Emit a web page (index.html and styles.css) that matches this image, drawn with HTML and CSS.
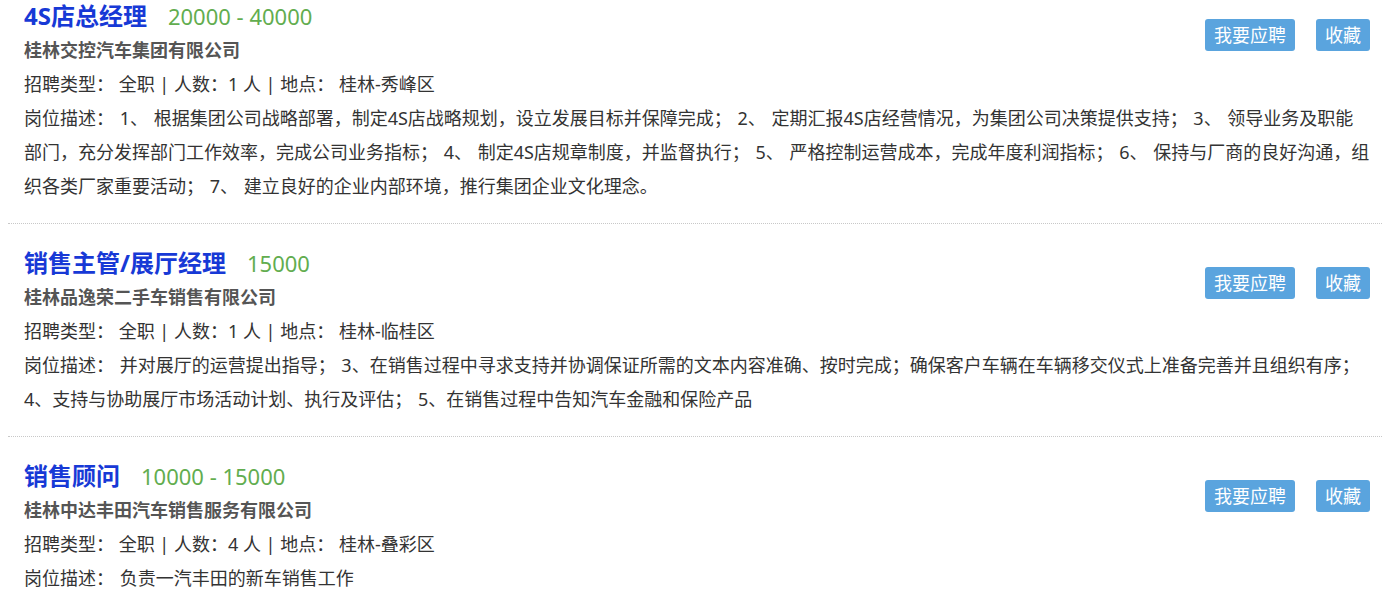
FILE: index.html
```html
<!DOCTYPE html>
<html lang="zh-CN">
<head>
<meta charset="UTF-8">
<meta name="viewport" content="width=device-width, initial-scale=1.0">
<title>招聘信息</title>
<link rel="stylesheet" href="styles.css">
</head>
<body>
<div id="jobList">
    <div class="job-item">
        <div class="job-actions">
            <button type="button" class="btn">我要应聘</button>
            <button type="button" class="btn">收藏</button>
        </div>
        <div class="job-head">
            <a class="job-title" href="#">4S店总经理</a>
            <span class="job-salary">20000 - 40000</span>
        </div>
        <div class="job-company">桂林交控汽车集团有限公司</div>
        <div class="job-meta">招聘类型： 全职 | 人数：1 人 | 地点： 桂林-秀峰区</div>
        <div class="job-desc">岗位描述： 1、 根据集团公司战略部署，制定4S店战略规划，设立发展目标并保障完成； 2、 定期汇报4S店经营情况，为集团公司决策提供支持； 3、 领导业务及职能部门，充分发挥部门工作效率，完成公司业务指标； 4、 制定4S店规章制度，并监督执行； 5、 严格控制运营成本，完成年度利润指标； 6、 保持与厂商的良好沟通，组织各类厂家重要活动； 7、 建立良好的企业内部环境，推行集团企业文化理念。</div>
    </div>
    <div class="job-item">
        <div class="job-actions">
            <button type="button" class="btn">我要应聘</button>
            <button type="button" class="btn">收藏</button>
        </div>
        <div class="job-head">
            <a class="job-title" href="#">销售主管/展厅经理</a>
            <span class="job-salary">15000</span>
        </div>
        <div class="job-company">桂林品逸荣二手车销售有限公司</div>
        <div class="job-meta">招聘类型： 全职 | 人数：1 人 | 地点： 桂林-临桂区</div>
        <div class="job-desc">岗位描述： 并对展厅的运营提出指导； 3、在销售过程中寻求支持并协调保证所需的文本内容准确、按时完成；确保客户车辆在车辆移交仪式上准备完善并且组织有序； 4、支持与协助展厅市场活动计划、执行及评估； 5、在销售过程中告知汽车金融和保险产品</div>
    </div>
    <div class="job-item">
        <div class="job-actions">
            <button type="button" class="btn">我要应聘</button>
            <button type="button" class="btn">收藏</button>
        </div>
        <div class="job-head">
            <a class="job-title" href="#">销售顾问</a>
            <span class="job-salary">10000 - 15000</span>
        </div>
        <div class="job-company">桂林中达丰田汽车销售服务有限公司</div>
        <div class="job-meta">招聘类型： 全职 | 人数：4 人 | 地点： 桂林-叠彩区</div>
        <div class="job-desc">岗位描述： 负责一汽丰田的新车销售工作</div>
    </div>
</div>
</body>
</html>
```

FILE: styles.css
```css
/* Job list */
body, html {
    font-family: "Noto Sans", "Noto Sans CJK SC", sans-serif;
    background: #fff;
    color: #333;
    margin: 0;
    padding: 0;
}
#jobList {
    margin-left: 8px;
}
.job-item {
    padding: 23px 12px 20px 16px;
    border-bottom: 1px dotted #c8c8c8;
    font-size: 18px;
    line-height: 34px;
}
.job-item:first-child {
    padding-top: 0;
}
.job-actions {
    float: right;
    display: flex;
    gap: 21px;
    margin-top: 20px;
}
.btn {
    background-color: #5aa4de;
    border: none;
    color: #fff;
    font-family: inherit;
    font-size: 18px;
    line-height: 32px;
    height: 32px;
    padding: 0 9px;
    border-radius: 3px;
    cursor: pointer;
}
.btn:hover {
    background-color: #4a94cf;
}
.job-head {
    display: flex;
    align-items: baseline;
    gap: 21px;
    margin-top: -1px;
}
.job-title {
    color: #1739d6;
    font-size: 24px;
    font-weight: bold;
    text-decoration: none;
}
.job-salary {
    color: #62ad4f;
    font-size: 22px;
}
.job-company {
    color: #555;
    font-weight: bold;
}
.job-meta, .job-desc {
    color: #333;
}
.job-desc {
    word-spacing: 1px;
}
```
